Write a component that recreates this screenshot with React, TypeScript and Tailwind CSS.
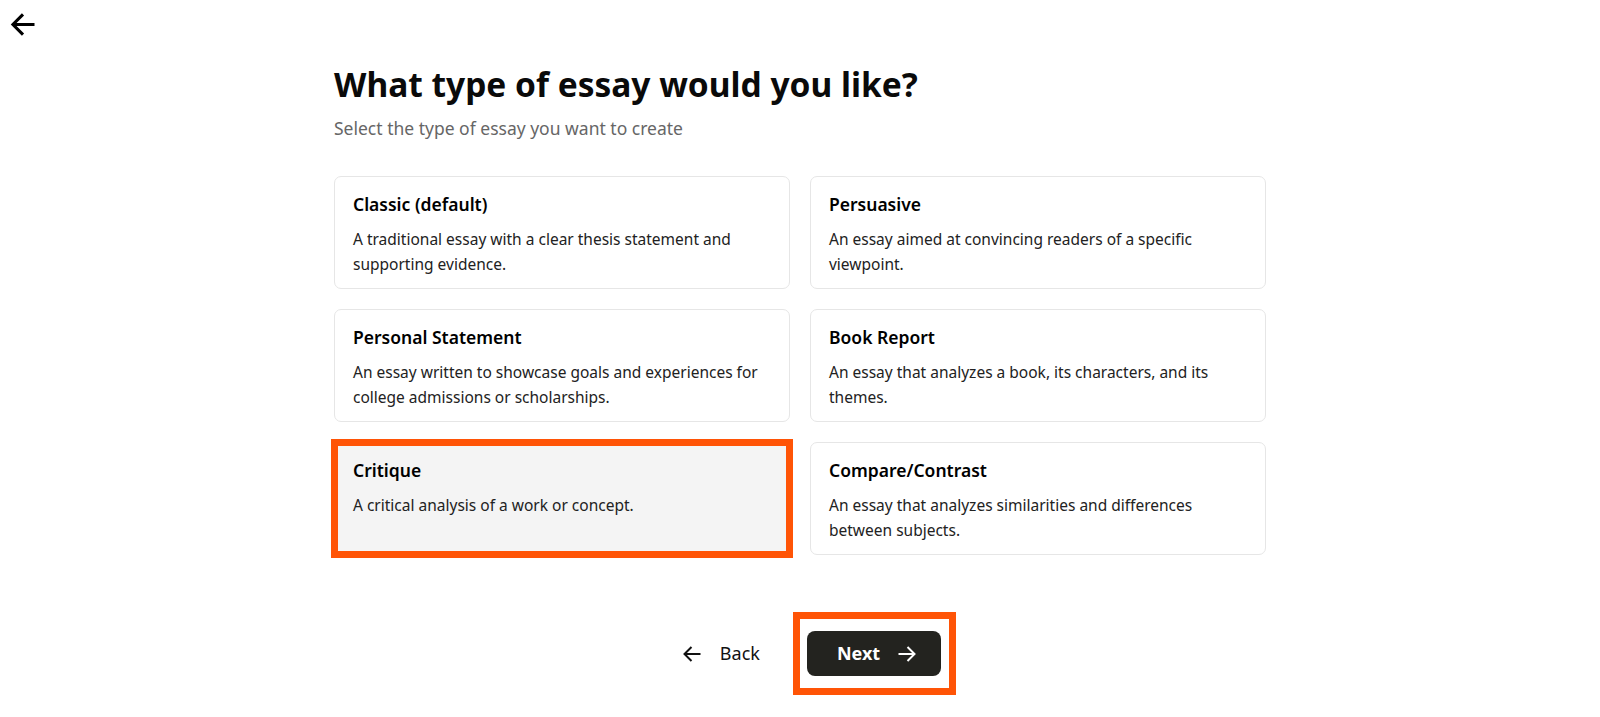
import { useState } from "react";

const essayTypes = [
  { id: "classic", title: "Classic (default)", description: "A traditional essay with a clear thesis statement and supporting evidence." },
  { id: "persuasive", title: "Persuasive", description: "An essay aimed at convincing readers of a specific viewpoint." },
  { id: "personal", title: "Personal Statement", description: "An essay written to showcase goals and experiences for college admissions or scholarships." },
  { id: "book", title: "Book Report", description: "An essay that analyzes a book, its characters, and its themes." },
  { id: "critique", title: "Critique", description: "A critical analysis of a work or concept." },
  { id: "compare", title: "Compare/Contrast", description: "An essay that analyzes similarities and differences between subjects." },
];

function ArrowLeftIcon({ className, strokeWidth = 2 }: { className?: string; strokeWidth?: number }) {
  return (
    <svg viewBox="0 0 26 24" fill="none" stroke="currentColor" strokeWidth={strokeWidth} className={className}>
      <path d="M25 12H2.5M13 1.5 2.5 12 13 22.5" />
    </svg>
  );
}

function ArrowRightIcon({ className }: { className?: string }) {
  return (
    <svg viewBox="0 0 18 16" fill="none" stroke="currentColor" strokeWidth={2} className={className}>
      <path d="M0.5 8H16.5M9.5 1 16.5 8 9.5 15" />
    </svg>
  );
}

export default function App() {
  const [selected, setSelected] = useState("critique");

  return (
    <div className="min-h-screen bg-white font-['Noto_Sans',sans-serif] text-black">
      {/* Header */}
      <div className="pl-[10px] pt-[13px]">
        <button className="block text-black">
          <ArrowLeftIcon className="h-[23px] w-[26px]" strokeWidth={3.2} />
        </button>
      </div>

      <div className="mx-auto mt-[28px] w-[932px]">
        <h1 className="text-[33.5px] font-bold leading-[40px] text-[#0a0a0a]">What type of essay would you like?</h1>
        <p className="mt-[12px] text-[17.5px] leading-6 text-[#666666]">Select the type of essay you want to create</p>

        {/* Essay type cards */}
        <div className="mt-[36px] grid grid-cols-2 gap-5">
          {essayTypes.map((t) => {
            const isSelected = selected === t.id;
            return (
              <button
                key={t.id}
                onClick={() => setSelected(t.id)}
                className={`relative flex h-[113px] flex-col items-start justify-start rounded-[7px] border px-[18px] pb-[11px] pt-[15px] text-left ${
                  isSelected ? "border-[#e2e2e2] bg-[#f4f4f4]" : "border-[#e6e6e6] bg-white"
                }`}
              >
                <div className="text-[17.5px] font-semibold leading-6 text-black">{t.title}</div>
                <div className="mt-[11px] text-[15.5px] leading-[25px] text-[#222222]">{t.description}</div>
                {isSelected && (
                  <span className="pointer-events-none absolute -inset-[4px] border-[7px] border-[#ff5406]" />
                )}
              </button>
            );
          })}
        </div>

        {/* Navigation */}
        <div className="mt-[76px] flex items-center justify-center">
          <button className="flex items-center gap-[19px] pl-[24px] pr-[16px] text-[18px] text-[#111111]">
            <ArrowRightIcon className="h-[16px] w-[18px] rotate-180" />
            <span>Back</span>
          </button>
          <button className="relative ml-[31px] flex h-[45px] items-center gap-[18px] rounded-[8px] bg-[#23231f] pl-[30px] pr-[25px] text-[18px] font-bold text-white">
            <span>Next</span>
            <ArrowRightIcon className="h-[16px] w-[18px]" />
            <span className="pointer-events-none absolute -bottom-[19px] -left-[14px] -right-[15px] -top-[19px] border-[7px] border-[#ff5406]" />
          </button>
        </div>
      </div>
    </div>
  );
}
